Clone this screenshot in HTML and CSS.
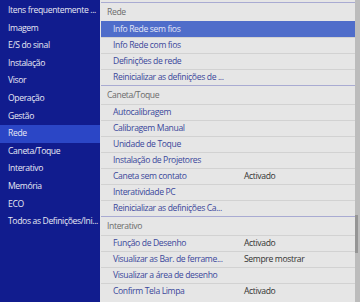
FILE: index.html
```html
<!DOCTYPE html>
<html lang="pt">
<head>
	<meta charset="UTF-8" />
	<meta name="viewport" content="width=device-width, initial-scale=1.0" />
	<title>Menu - Rede</title>
	<link rel="stylesheet" href="styles.css">
</head>
<body>
	<div class="screen">
		<nav class="menu">
			<div class="menu-item">Itens frequentemente ...</div>
			<div class="menu-item">Imagem</div>
			<div class="menu-item">E/S do sinal</div>
			<div class="menu-item">Instalação</div>
			<div class="menu-item">Visor</div>
			<div class="menu-item">Operação</div>
			<div class="menu-item">Gestão</div>
			<div class="menu-item active">Rede</div>
			<div class="menu-item">Caneta/Toque</div>
			<div class="menu-item">Interativo</div>
			<div class="menu-item">Memória</div>
			<div class="menu-item">ECO</div>
			<div class="menu-item">Todos as Definições/Ini...</div>
		</nav>

		<div class="panel">
			<div class="list">
				<section class="group">
					<div class="group-title">Rede</div>
					<div class="row active"><span>Info Rede sem fios</span><span class="value"></span></div>
					<div class="row"><span>Info Rede com fios</span><span class="value"></span></div>
					<div class="row"><span>Definições de rede</span><span class="value"></span></div>
					<div class="row"><span>Reinicializar as definições de ...</span><span class="value"></span></div>
				</section>
				<section class="group">
					<div class="group-title">Caneta/Toque</div>
					<div class="row"><span>Autocalibragem</span><span class="value"></span></div>
					<div class="row"><span>Calibragem Manual</span><span class="value"></span></div>
					<div class="row"><span>Unidade de Toque</span><span class="value"></span></div>
					<div class="row"><span>Instalação de Projetores</span><span class="value"></span></div>
					<div class="row"><span>Caneta sem contato</span><span class="value">Activado</span></div>
					<div class="row"><span>Interatividade PC</span><span class="value"></span></div>
					<div class="row"><span>Reinicializar as definições Ca...</span><span class="value"></span></div>
				</section>
				<section class="group">
					<div class="group-title">Interativo</div>
					<div class="row"><span>Função de Desenho</span><span class="value">Activado</span></div>
					<div class="row"><span>Visualizar as Bar. de ferrame...</span><span class="value">Sempre mostrar</span></div>
					<div class="row"><span>Visualizar a área de desenho</span><span class="value"></span></div>
					<div class="row"><span>Confirm Tela Limpa</span><span class="value">Activado</span></div>
				</section>
			</div>
			<div class="scrollbar"><div class="thumb"></div></div>
		</div>
	</div>
</body>
</html>
```

FILE: styles.css
```css
body {
	margin: 0;
	font-family: "Open Sans", "Noto Sans", sans-serif;
	font-size: 8.6px;
	letter-spacing: -0.36px;
	background-color: #e6e6e6;
}
.screen {
	display: grid;
	grid-template-columns: 100px 1fr;
	width: 360px;
	height: 302px;
	overflow: hidden;
}
.menu {
	background-color: #111c8e;
	padding-top: 2px;
}
.menu-item {
	height: 17.6px;
	line-height: 17.6px;
	padding-left: 8px;
	color: #e8e9f4;
	white-space: nowrap;
}
.menu-item.active {
	background-color: #2b46c6;
}
.panel {
	display: flex;
	background-color: #e6e6e6;
}
.list {
	flex: 1;
	padding: 2px 0 0 1px;
}
.group {
	border-top: 1px solid #a9abd2;
}
.group-title {
	height: 18px;
	line-height: 18px;
	padding-left: 6px;
	color: #6b6b6b;
}
.row {
	display: grid;
	grid-template-columns: 131px 1fr;
	height: 16px;
	line-height: 15px;
	box-sizing: border-box;
	padding-left: 12px;
	border-top: 1px solid #d2d2d2;
	color: #3a479b;
	white-space: nowrap;
}
.row .value {
	color: #333;
}
.row.active {
	background-color: #4f6dca;
	border-top-color: #4f6dca;
	color: #e3e7f8;
}
.scrollbar {
	width: 5px;
	background-color: #bcbcbc;
	position: relative;
}
.thumb {
	position: absolute;
	top: 215px;
	left: 0;
	width: 3px;
	height: 38px;
	background-color: #959595;
}
```
